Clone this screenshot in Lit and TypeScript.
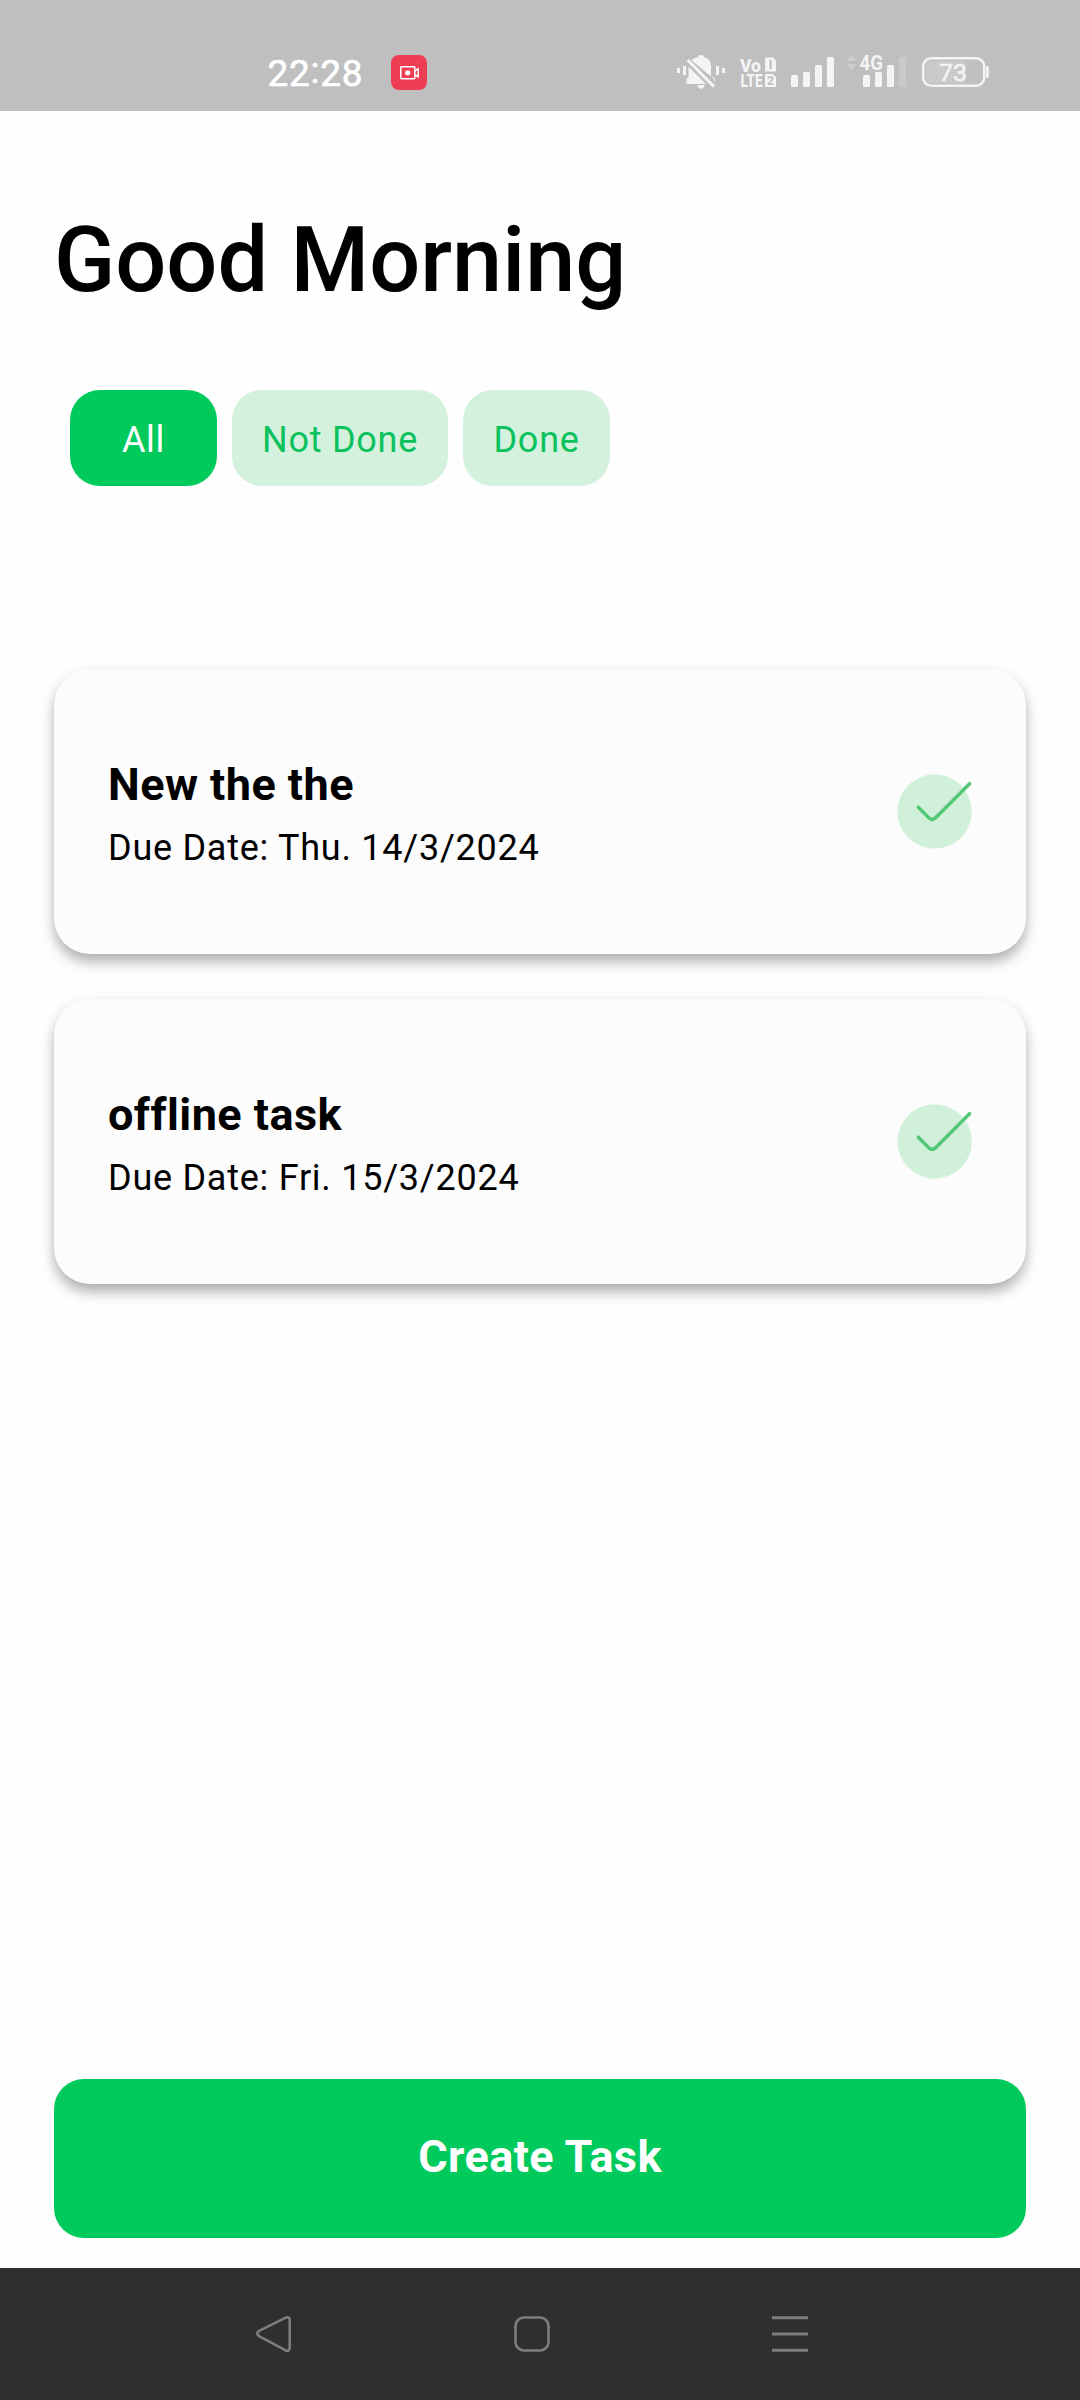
import { LitElement, html, css, svg } from "lit";
import { customElement, property, state } from "lit/decorators.js";
import { classMap } from "lit/directives/class-map.js";

@customElement("status-bar")
class StatusBar extends LitElement {
  static styles = css`
    :host { display: block; }
    .bar {
      box-sizing: border-box; height: 111px; background: #bfbfbf;
      display: flex; align-items: flex-start; padding: 46px 90px 0 267px;
      font-family: Roboto, "Noto Sans", sans-serif;
    }
    svg { display: block; height: 52px; flex: none; }
    .clock { width: 98px; }
    .rec { width: 36px; margin-left: 26px; }
    .bell { width: 50px; margin-left: auto; }
    .volte { width: 37px; margin-left: 14px; }
    .signal { width: 44px; margin-left: 14px; }
    .signal2 { width: 62px; margin-left: 11px; }
    .battery { width: 69px; margin-left: 13px; }
  `;

  render() {
    return html`<div class="bar">
      <svg class="clock" viewBox="267 46 98 52"><text x="267.500" y="86" font-size="37" fill="#fff" stroke="#fff" stroke-width=".6" textLength="95" lengthAdjust="spacing">22<tspan dy="-3.500">:</tspan><tspan dy="3.500">28</tspan></text></svg>
      <svg class="rec" viewBox="0 -8 36 52">
        <rect y="1" width="36" height="35" rx="8" fill="#ee3e54" />
        <g fill="none" stroke="#fff" stroke-width="1.5" stroke-linejoin="round">
          <rect x="9.8" y="12.8" width="14" height="12" rx=".6" />
          <path d="M23.8 17.2l3.4-2.7v8.6l-3.4-2.7" />
        </g>
        <circle cx="16.7" cy="18.8" r="2.6" fill="#fff" />
      </svg>
      <svg class="bell" viewBox="676 46 50 52" fill="#f4f4f4">
        <rect x="677" y="68" width="3" height="5" /><rect x="683" y="66" width="3" height="9" />
        <rect x="716" y="66" width="3" height="9" /><rect x="722" y="68" width="3" height="5" />
        <path d="M691.5 60.2Q694 57.8 697.5 57.2Q698.500 55 701 55Q703.500 55 704.500 57.200Q711 59 711 67V76.500Z" />
        <path d="M688.500 66.500L706 84H686.500V80Q686.500 78 688.500 77Z" />
        <path d="M686.500 61L688.800 59L715 85.500L713 87.800Z" />
        <path d="M711 74.500Q711.500 76 713.500 77.500Q715 78.500 715 80V82Z" />
        <path d="M697.500 85H704.500Q704 88.700 701 88.700Q698 88.700 697.500 85Z" />
      </svg>
      <svg class="volte" viewBox="740 46 37 52" fill="#f4f4f4" font-weight="800">
        <text x="740" y="71.500" font-size="18.500" textLength="21" lengthAdjust="spacingAndGlyphs">Vo</text>
        <text x="740.500" y="87" font-size="18.500" textLength="22" lengthAdjust="spacingAndGlyphs">LTE</text>
        <path d="M765 57.500h8l3 3v11h-11z" /><path d="M765 74h8l3 3v10h-11z" />
        <g fill="#bfbfbf">
          <rect x="769.500" y="60" width="2.200" height="9" />
          <text x="767" y="85" font-size="13" font-weight="700" textLength="7" lengthAdjust="spacingAndGlyphs">2</text>
        </g>
      </svg>
      <svg class="signal" viewBox="791 46 44 52" fill="#f4f4f4">
        ${[[791, 75], [803, 72], [815, 65], [827, 57]].map(([x, y]) => svg`<rect x=${x} y=${y} width="7" height=${87 - y} rx="1.5" />`)}
      </svg>
      <svg class="signal2" viewBox="846 46 62 52" fill="#f4f4f4">
        <path d="M846.500 61L851.500 55L856.500 61ZM846.500 64.200L851.500 70.200L856.500 64.200Z" fill="#cecece" />
        <text x="859.500" y="70.200" font-size="21" font-weight="700" textLength="23.500" lengthAdjust="spacingAndGlyphs">4G</text>
        ${[[863, 75], [875, 72], [887, 65]].map(([x, y]) => svg`<rect x=${x} y=${y} width="7" height=${87 - y} rx="1.5" />`)}
        <rect x="899" y="57" width="7" height="30" rx="1.500" fill="#cacaca" />
      </svg>
      <svg class="battery" viewBox="921 46 69 52">
        <rect x="926" y="61" width="40" height="22" rx="3.500" fill="#cacaca" />
        <rect x="923.200" y="58.200" width="61" height="27.500" rx="8" fill="none" stroke="#f4f4f4" stroke-width="2.500" />
        <rect x="986" y="66" width="2.800" height="12" rx="1.400" fill="#f4f4f4" />
        <text x="939" y="81.300" fill="#f4f4f4" stroke="#f4f4f4" stroke-width=".5" font-size="24.500" textLength="28" lengthAdjust="spacingAndGlyphs">73</text>
      </svg>
    </div>`;
  }
}

@customElement("task-card")
class TaskCard extends LitElement {
  @property() name = "";
  @property() due = "";

  static styles = css`
    :host { display: block; }
    .card {
      box-sizing: border-box; height: 285px; padding: 89px 52px 0 54px;
      display: flex; justify-content: space-between; align-items: flex-start;
      background: #fcfcfc; border-radius: 36px;
      box-shadow: 0 9px 14px -1px rgba(0, 0, 0, 0.28), 0 3px 14px rgba(0, 0, 0, 0.08);
    }
    .text { display: flex; flex-direction: column; gap: 14px; color: #000; }
    .name { font-size: 45px; line-height: 54px; font-weight: 700; letter-spacing: 0.45px; }
    .due { font-size: 36px; line-height: 44px; letter-spacing: 0.75px; }
    .check { display: block; width: 77px; height: 75px; margin-top: 15.500px; }
  `;

  render() {
    return html`<div class="card">
      <div class="text">
        <div class="name">${this.name}</div>
        <div class="due">Due Date: ${this.due}</div>
      </div>
      <svg class="check" viewBox="897 773.500 77 75">
        <circle cx="934.600" cy="811" r="37.200" fill="#d1f0da" />
        <path d="M918.300 806.700L929 817.400Q932.200 820.300 935.400 817.400L969.600 783.200" fill="none" stroke="#55c878" stroke-width="3.500" stroke-linecap="round" />
      </svg>
    </div>`;
  }
}

@customElement("nav-bar")
class NavBar extends LitElement {
  static styles = css`
    :host { display: block; }
    .bar {
      box-sizing: border-box; height: 132px; background: #2f2f2f;
      display: flex; justify-content: space-between; padding: 47px 271px 0 255px;
    }
    svg { display: block; width: 38px; height: 38px; fill: none; stroke: #7d7d7d; stroke-width: 2.600; stroke-linejoin: round; }
  `;

  render() {
    return html`<div class="bar">
      <svg viewBox="0 0 38 38"><path d="M3.600 16.200L30.200 2.800Q34.600 1 34.700 5.200V32.800Q34.600 37 30.200 35.200L3.600 20.800Q1 18.500 3.600 16.200Z" /></svg>
      <svg viewBox="0 0 38 38"><rect x="2.500" y="2.500" width="33" height="33" rx="8.500" /></svg>
      <svg viewBox="0 0 38 38"><path stroke-width="3" d="M1 2.700H37M1 19H37M1 35.300H37" /></svg>
    </div>`;
  }
}

@customElement("app-root")
class AppRoot extends LitElement {
  @state() private filter = "All";

  private tasks = [
    { name: "New the the", due: "Thu. 14/3/2024" },
    { name: "offline task", due: "Fri. 15/3/2024" },
  ];

  static styles = css`
    :host { display: block; }
    .screen {
      width: 1080px; height: 2400px; display: flex; flex-direction: column;
      overflow: hidden; background: #fefefe; font-family: Roboto, sans-serif;
    }
    .content { flex: 1; display: flex; flex-direction: column; padding: 97px 54px 30px; }
    .title { margin: 0; color: #000; font-size: 90px; line-height: 106px; font-weight: 500; }
    .chips { display: flex; gap: 15px; margin: 76px 0 0 16px; }
    .chip {
      box-sizing: border-box; min-width: 147px; height: 96px; padding: 4px 30px 0;
      border: 0; border-radius: 30px; background: #d3f1dc; color: #0ac25d;
      font: 400 36px/44px Roboto, sans-serif; letter-spacing: 0.75px;
    }
    .active { background: #00ca5b; color: #fff; }
    .tasks { display: flex; flex-direction: column; gap: 45px; margin-top: 183px; }
    .create {
      box-sizing: border-box; margin-top: auto; height: 159px; border: 0; border-radius: 30px;
      padding: 0 0 4px; background: #00ca5b; color: #fff;
      font: 700 45px/52px Roboto, sans-serif; letter-spacing: 0.4px;
    }
  `;

  render() {
    return html`<div class="screen">
      <status-bar></status-bar>
      <main class="content">
        <h1 class="title">Good Morning</h1>
        <div class="chips">
          ${["All", "Not Done", "Done"].map(
            (f) => html`<button class=${classMap({ chip: true, active: f === this.filter })} @click=${() => (this.filter = f)}>${f}</button>`
          )}
        </div>
        <div class="tasks">
          ${this.tasks.map((t) => html`<task-card .name=${t.name} .due=${t.due}></task-card>`)}
        </div>
        <button class="create">Create Task</button>
      </main>
      <nav-bar></nav-bar>
    </div>`;
  }
}
